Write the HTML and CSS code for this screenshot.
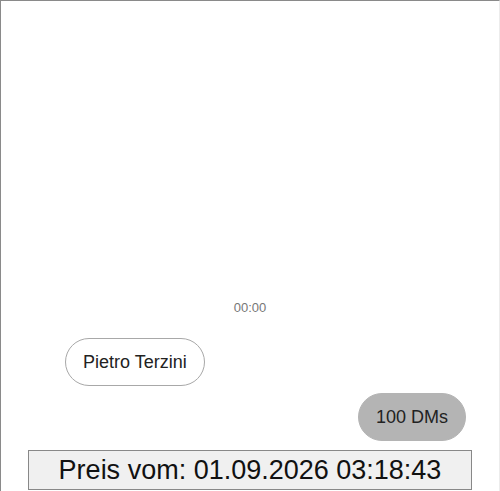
FILE: index.html
```html
<!DOCTYPE html>
<html lang="en">
<head>
  <meta charset="UTF-8" />
  <meta name="viewport" content="width=device-width, initial-scale=1.0" />
  <title>Chat</title>
  <link rel="stylesheet" href="styles.css">
</head>
<body>
  <div class="frame">
    <div class="thread">
      <p class="time">00:00</p>
      <div class="row left">
        <div class="bubble in">Pietro Terzini</div>
      </div>
      <div class="row right">
        <div class="bubble out">100 DMs</div>
      </div>
    </div>
    <div class="price">Preis vom: 01.09.2026 03:18:43</div>
  </div>
</body>
</html>
```

FILE: styles.css
```css
html, body { margin: 0; padding: 0; background: #fff; }
body { font-family: "Liberation Sans", Arial, sans-serif; color: #222; }
.frame {
  height: 491px;
  box-sizing: border-box;
  border-top: 1px solid #8a8a8a;
  border-left: 1px solid #8a8a8a;
  border-right: 1px solid #ececec;
  display: flex;
  flex-direction: column;
  justify-content: flex-end;
}
.thread { display: flex; flex-direction: column; }
.time { margin: 0 0 22px; text-align: center; font-size: 13px; line-height: 16px; color: #777; }
.row { display: flex; }
.row.left { padding-left: 64px; margin-bottom: 7px; }
.row.right { justify-content: flex-end; padding-right: 33px; margin-bottom: 9px; }
.bubble {
  font-size: 18px;
  line-height: 20px;
  padding: 13px 17px;
  border-radius: 25px;
}
.bubble.in { border: 1px solid #a8a8a8; background: #fff; }
.bubble.out { border: 1px solid #b4b4b4; background: #b4b4b4; }
.price {
  margin: 0 27px 1px;
  height: 40px;
  box-sizing: border-box;
  border: 1px solid #888;
  background: #f0f0f0;
  color: #111;
  font-size: 27px;
  line-height: 38px;
  text-align: center;
}
```
